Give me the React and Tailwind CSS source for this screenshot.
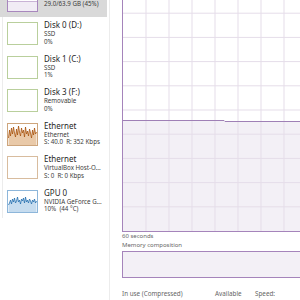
import React from 'react';

const ethPeaks = [14, 6, 12, 4, 10, 3, 9, 13, 5, 11, 2, 8, 12, 4, 9, 6, 13, 3, 10, 7, 12, 5, 9, 14, 6, 11, 4, 10, 8];
const gpuPeaks = [14, 12, 9, 13, 8, 11, 7, 12, 10, 6, 11, 9, 13, 8, 10, 7, 12, 6, 11, 9, 12, 8, 10, 13, 9, 11, 8, 12, 10];

const Spikes = ({ peaks, stroke, fill }) => {
    const pts = peaks.map((p, i) => `${i + 0.5},${p}`).join(' ');
    return (
        <svg width="29" height="21" viewBox="0 0 29 21" className="block">
            <polygon points={`0.5,21 ${pts} 28.5,21`} fill={fill} />
            <polyline points={pts} fill="none" stroke={stroke} strokeWidth="0.8" />
        </svg>
    );
};

const Thumb = ({ kind }) => {
    if (kind === 'mem') {
        return (
            <div className="w-[31px] h-[23px] border border-[#a887bd] bg-white flex flex-col justify-end">
                <div className="h-[10px] bg-[#f1ecf5] border-t border-[#c9b3d6]" />
            </div>
        );
    }
    if (kind === 'disk') {
        return <div className="w-[31px] h-[23px] border border-[#b9cf9c] bg-white" />;
    }
    if (kind === 'eth') {
        return (
            <div className="w-[31px] h-[23px] border border-[#cda57c] bg-white">
                <Spikes peaks={ethPeaks} stroke="#a8530c" fill="#e9c9a8" />
            </div>
        );
    }
    if (kind === 'eth2') {
        return <div className="w-[31px] h-[23px] border border-[#d8bc9e] bg-white" />;
    }
    return (
        <div className="w-[31px] h-[23px] border border-[#8db6da] bg-white">
            <Spikes peaks={gpuPeaks} stroke="#2670b0" fill="#c6dcef" />
        </div>
    );
};

const items = [
    { title: 'Memory', lines: ['29.0/63.9 GB (45%)'], kind: 'mem', selected: true },
    { title: 'Disk 0 (D:)', lines: ['SSD', '0%'], kind: 'disk' },
    { title: 'Disk 1 (C:)', lines: ['SSD', '1%'], kind: 'disk' },
    { title: 'Disk 3 (F:)', lines: ['Removable', '0%'], kind: 'disk' },
    { title: 'Ethernet', lines: ['Ethernet', 'S: 40.0  R: 352 Kbps'], kind: 'eth' },
    { title: 'Ethernet', lines: ['VirtualBox Host-O...', 'S: 0  R: 0 Kbps'], kind: 'eth2' },
    { title: 'GPU 0', lines: ['NVIDIA GeForce G...', '10%  (44 °C)'], kind: 'gpu' },
];

const SideItem = ({ item }) => (
    <div className={`h-[33.5px] shrink-0 flex items-start gap-[6px] ${item.selected ? 'bg-[#d9d9d9] pl-[7px]' : 'ml-[2px] pl-[4px] border-l border-[#ececec]'}`}>
        <div className="mt-[5px]">
            <Thumb kind={item.kind} />
        </div>
        <div className={`flex flex-col whitespace-nowrap ${item.selected ? 'mt-[6.5px]' : 'mt-[3px]'}`}>
            <span className="text-[8px] leading-[10px] text-[#1f1f1f]">{item.title}</span>
            {item.lines.map((l, i) => (
                <span key={i} className="text-[6.2px] leading-[7.5px] text-[#3c3c3c] whitespace-pre">{l}</span>
            ))}
        </div>
    </div>
);

const MemChart = () => {
    const w = 460;
    const h = 242;
    const cols = 20;
    const rows = 10;
    const cw = w / cols;
    const rh = h / rows;
    return (
        <svg width={w} height={h} className="block">
            <rect x="0" y="0" width={w} height={h} fill="#ffffff" />
            <polygon points={`0,${h} 0,131 101,131 102,132 ${w},132 ${w},${h}`} fill="#f3f0f6" />
            {Array.from({ length: cols - 1 }).map((_, i) => (
                <line key={'v' + i} x1={(i + 1) * cw} y1="0" x2={(i + 1) * cw} y2={h} stroke="#e5dde9" strokeWidth="1" />
            ))}
            {Array.from({ length: rows - 1 }).map((_, i) => (
                <line key={'h' + i} x1="0" y1={(i + 1) * rh} x2={w} y2={(i + 1) * rh} stroke="#e5dde9" strokeWidth="1" />
            ))}
            <polyline points={`0,131.5 101,131.5 102,132.5 ${w},132.5`} fill="none" stroke="#9f80b6" strokeWidth="1" />
        </svg>
    );
};

export default function App() {
    return (
        <div className="w-[300px] h-[300px] overflow-hidden flex bg-white" style={{ fontFamily: '"Noto Sans", "Open Sans", sans-serif' }}>
            <div className="w-[107px] shrink-0 flex flex-col -mt-[16.5px]">
                {items.map((it, i) => (
                    <SideItem key={i} item={it} />
                ))}
            </div>
            <div className="w-px shrink-0 bg-white ml-[2px] border-l border-[#ececec]" />
            <div className="flex-1 min-w-0 pl-[12px] flex flex-col">
                <div className="-mt-[12px] w-[462px] border border-[#a584bb] shrink-0">
                    <MemChart />
                </div>
                <div className="text-[6px] leading-[8px] text-[#666]">60 seconds</div>
                <div className="mt-[1px] text-[6px] leading-[8px] text-[#666]">Memory composition</div>
                <div className="mt-[2px] w-[462px] h-[27px] shrink-0 border border-[#a584bb] bg-[#f3f0f6]" />
                <div className="mt-[12px] flex text-[6.3px] leading-[8px] text-[#666] whitespace-nowrap">
                    <span className="w-[93px]">In use (Compressed)</span>
                    <span className="w-[40px]">Available</span>
                    <span>Speed:</span>
                </div>
            </div>
        </div>
    );
}
